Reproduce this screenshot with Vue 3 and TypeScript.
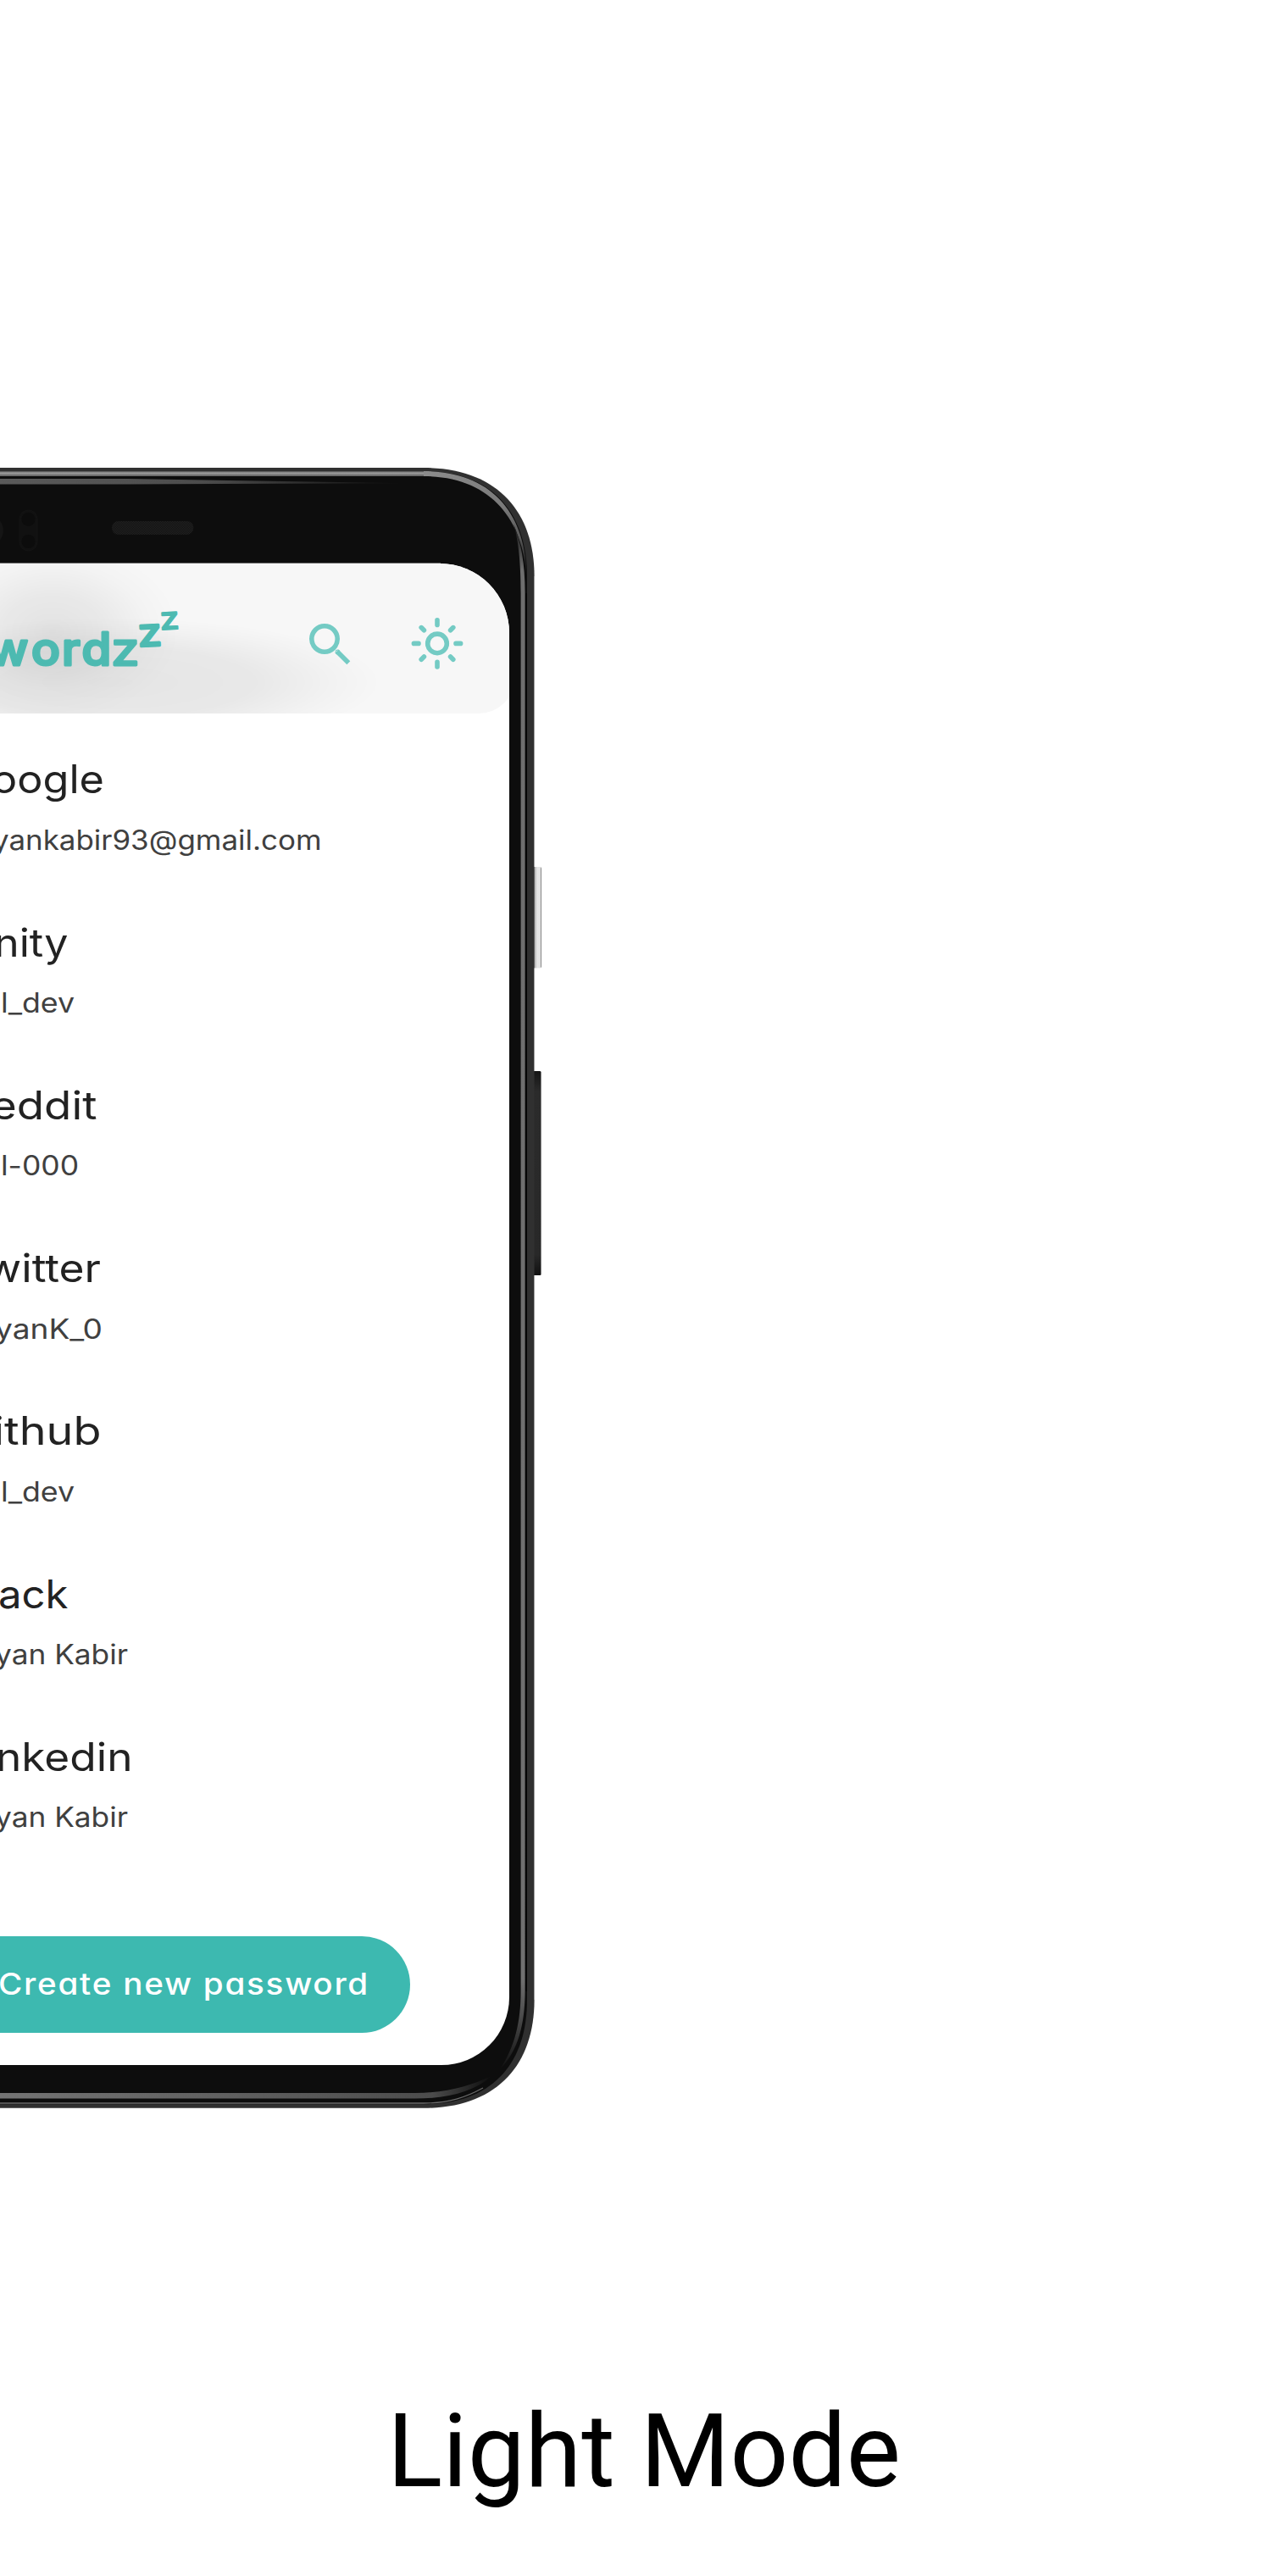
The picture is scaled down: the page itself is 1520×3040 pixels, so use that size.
<script setup lang="ts">
interface Line {
  text: string
  x: number
  end: number
}

interface Entry {
  site: Line
  user: Line
}

const line = (text: string, x: number, end: number): Line => ({ text, x, end })

// The left part of the phone lies outside the page, so each line starts at the page edge.
const entries: Entry[] = [
  { site: line('oogle', -10, 123), user: line('yankabir93@gmail.com', -9, 379.5) },
  { site: line('nity', -7, 80.5), user: line('l_dev', 1, 88) },
  { site: line('eddit', -11, 114.5), user: line('l-000', 1, 93) },
  { site: line('witter', -17, 119), user: line('yanK_0', -6, 121) },
  { site: line('ithub', -8, 119.5), user: line('l_dev', 1, 88) },
  { site: line('ack', -2, 80.5), user: line('yan Kabir', -6, 151) },
  { site: line('nkedin', -5, 156.5), user: line('yan Kabir', -6, 151) },
]

const rays = [0, 90, 180, 270]
</script>

<template>
  <main class="page">
    <section class="phone">
      <svg class="shell" width="640" height="1936" viewBox="0 552 640 1936">
        <defs>
          <linearGradient id="rim" x1="0" y1="556" x2="0" y2="562" gradientUnits="userSpaceOnUse">
            <stop offset="0" stop-color="#4a4a4a" />
            <stop offset="0.35" stop-color="#a0a0a0" />
            <stop offset="1" stop-color="#5c5c5c" />
          </linearGradient>
          <linearGradient id="rimSide" x1="500" y1="556" x2="622" y2="680" gradientUnits="userSpaceOnUse">
            <stop offset="0" stop-color="#8c8c8c" />
            <stop offset="0.55" stop-color="#7a7a7a" />
            <stop offset="0.8" stop-color="#555" />
            <stop offset="1" stop-color="#111" />
          </linearGradient>
          <linearGradient id="bandTop" x1="0" y1="0" x2="480" y2="0" gradientUnits="userSpaceOnUse">
            <stop offset="0" stop-color="#5a5a5a" />
            <stop offset="0.5" stop-color="#4c4c4c" />
            <stop offset="1" stop-color="#0d0d0d" />
          </linearGradient>
          <linearGradient id="bandSide" x1="0" y1="618" x2="0" y2="2445" gradientUnits="userSpaceOnUse">
            <stop offset="0" stop-color="#0d0d0d" />
            <stop offset="0.03" stop-color="#6e6e6e" />
            <stop offset="0.94" stop-color="#707070" />
            <stop offset="0.965" stop-color="#4a4a4a" />
            <stop offset="1" stop-color="#0d0d0d" />
          </linearGradient>
          <linearGradient id="bandBottom" x1="0" y1="0" x2="580" y2="0" gradientUnits="userSpaceOnUse">
            <stop offset="0" stop-color="#747474" />
            <stop offset="0.6" stop-color="#5a5a5a" />
            <stop offset="0.88" stop-color="#4c4c4c" />
            <stop offset="1" stop-color="#0d0d0d" />
          </linearGradient>
          <linearGradient id="power" x1="630" y1="0" x2="639" y2="0" gradientUnits="userSpaceOnUse">
            <stop offset="0" stop-color="#999" />
            <stop offset="0.3" stop-color="#d2d2d2" />
            <stop offset="0.45" stop-color="#e6e6e6" />
            <stop offset="0.85" stop-color="#e2e2e2" />
            <stop offset="0.92" stop-color="#888" />
          </linearGradient>
          <linearGradient id="volume" x1="0" y1="1264" x2="0" y2="1505" gradientUnits="userSpaceOnUse">
            <stop offset="0" stop-color="#141414" />
            <stop offset="0.1" stop-color="#2b2b2b" />
            <stop offset="0.9" stop-color="#282828" />
            <stop offset="1" stop-color="#101010" />
          </linearGradient>
          <pattern id="mesh" width="2" height="2" patternUnits="userSpaceOnUse">
            <rect width="2" height="2" fill="#111" />
            <rect width="1" height="1" fill="#222" />
            <rect x="1" y="1" width="1" height="1" fill="#222" />
          </pattern>
        </defs>

        <rect x="626" y="1023" width="13" height="119.5" rx="2" fill="url(#power)" />
        <rect x="626" y="1264" width="12.6" height="241" rx="1.5" fill="url(#volume)" />
        <path d="M638.5 1265V1504" stroke="#8a8a8a" stroke-width="0.8" />

        <path d="M-2 552H500C585 552 630.6 602 630.6 680V2360C630.6 2438 585 2487.8 500 2487.8H-2Z" fill="#303030" />
        <path d="M630.5 680V1023M630.5 1142.5V1264M630.5 1505V2360" stroke="#a8a8a8" stroke-width="0.8" />
        <path d="M-2 556H500C582 556 622 606 622 680V2360C622 2434 582 2483.2 500 2483.2H-2Z" fill="#0d0d0d" />
        <rect x="-2" y="556" width="504" height="6" fill="url(#rim)" />
        <path d="M500 556C582 556 621 608 621.5 680C617 612 578 562 500 562Z" fill="url(#rimSide)" />
        <path d="M-2 565H150L480 570.2L150 571.5H-2Z" fill="url(#bandTop)" />
        <path d="M606 618C612 640 614.6 662 614.6 700V2350C614.6 2385 608 2415 590 2442C612 2420 619.4 2388 619.6 2350V700C619.6 665 615 640 606 618Z" fill="url(#bandSide)" />
        <path d="M620.8 700V2350" stroke="#050505" stroke-width="1.5" />
        <path d="M-2 2470H490C525 2470 555 2462 580 2450C560 2468 530 2476.6 490 2476.6H-2Z" fill="url(#bandBottom)" />
        <path d="M-2 2482H500C530 2482 550 2475 570 2464" fill="none" stroke="#6a6a6a" stroke-width="1.3" />

        <circle cx="-14" cy="626" r="18" fill="#151515" />
        <rect x="23" y="602" width="21" height="48" rx="10.5" fill="#111" stroke="#141414" />
        <circle cx="33.5" cy="612.8" r="8" fill="#0c0c0c" />
        <circle cx="33.5" cy="639" r="8" fill="#0c0c0c" />
        <rect x="132" y="615" width="96.4" height="16" rx="8" fill="url(#mesh)" />
        <path d="M-2 664.5H520" stroke="#6a6a6a" />
      </svg>

      <div class="screen">
        <header class="bar">
          <svg width="601" height="177" viewBox="0 665 601 177">
            <g class="brand">
              <text y="784.8" x="-12.4 34.9 68.8 91" transform="scale(1.06 1)">word</text>
              <text transform="translate(131.4 784.8) scale(1.12 1)">z</text>
              <text class="z2" transform="translate(163.4 763) rotate(-3) scale(1.12 1)">z</text>
              <text class="z3" transform="translate(189.4 743) rotate(-3) scale(1.12 1)">z</text>
            </g>
            <g class="icon">
              <circle cx="383" cy="754" r="15.2" />
              <path d="M397.5 768.5L411.3 782.3" />
              <circle cx="398.4" cy="769.4" r="0.4" stroke-width="4.8" />
            </g>
            <g class="icon round" transform="translate(516 759.4)">
              <circle r="11.3" />
              <path v-for="a in rays" :key="a" :transform="`rotate(${a})`" d="M0-27.6V-22M15.6-15.6L18.8-18.8" />
            </g>
          </svg>
        </header>

        <ul class="list">
          <li v-for="(e, i) in entries" :key="i" class="entry">
            <svg class="site" width="601" height="60">
              <text :x="e.site.x" y="45" :textLength="e.site.end - e.site.x" lengthAdjust="spacingAndGlyphs">{{ e.site.text }}</text>
            </svg>
            <svg class="user" width="601" height="40">
              <text :x="e.user.x" y="30" :textLength="e.user.end - e.user.x" lengthAdjust="spacingAndGlyphs">{{ e.user.text }}</text>
            </svg>
          </li>
        </ul>

        <button class="create" type="button">
          <svg width="484" height="114">
            <text x="-2" y="69" textLength="438" lengthAdjust="spacingAndGlyphs">Create new password</text>
          </svg>
        </button>
      </div>
    </section>

    <h1 class="caption">Light Mode</h1>
  </main>
</template>

<style>
body {
  margin: 0;
  background: #fff;
}
</style>

<style scoped>
.page {
  display: flex;
  flex-direction: column;
  width: 1520px;
  height: 3040px;
  padding-top: 552px;
  box-sizing: border-box;
  overflow: hidden;
  background: #fff;
  font-family: Inter, "Liberation Sans", sans-serif;
}

svg {
  display: block;
}

.phone {
  display: grid;
  flex: none;
  width: 640px;
  height: 1936px;
}

.shell,
.screen {
  grid-area: 1 / 1;
}

.screen {
  display: flex;
  flex-direction: column;
  align-items: flex-start;
  width: 601px;
  height: 1771.7px;
  margin-top: 113px;
  overflow: hidden;
  border-radius: 0 82px 80px 0;
  background: #fff;
}

.bar {
  flex: none;
  width: 607px;
  height: 177.3px;
  border-radius: 0 0 42px 0;
  background:
    radial-gradient(ellipse 150px 105px at 62px 80px, rgba(0, 0, 0, 0.085), rgba(0, 0, 0, 0.062) 35%, rgba(0, 0, 0, 0.016) 75%, transparent),
    radial-gradient(ellipse 320px 76px at 130px 140px, rgba(0, 0, 0, 0.075), rgba(0, 0, 0, 0.062) 50%, rgba(0, 0, 0, 0.02) 82%, transparent),
    #f7f7f7;
}

.brand {
  fill: #4dbab1;
  stroke: #4dbab1;
  stroke-width: 3;
  stroke-linejoin: round;
  font-size: 53px;
  font-weight: 500;
}

.brand text + text {
  font-weight: 400;
}

.brand .z2 {
  font-size: 45px;
}

.brand .z3 {
  font-size: 36px;
  stroke-width: 2.2;
}

.icon {
  fill: none;
  stroke: #74cbc4;
  stroke-width: 5.6;
}

.round {
  stroke-linecap: round;
}

.list {
  flex: none;
  margin: 0;
  padding: 49.2px 0 0;
  list-style: none;
}

.entry {
  display: flex;
  flex-direction: column;
  gap: 21.5px;
  height: 192.25px;
}

.site {
  fill: #222;
  font-size: 46px;
}

.user {
  fill: #404040;
  font-size: 32px;
}

.create {
  flex: none;
  width: 484px;
  height: 114.2px;
  margin: 48px 0 0;
  padding: 0;
  border: 0;
  border-radius: 0 57px 57px 0;
  background: #3db9b0;
  fill: #fff;
  font-family: inherit;
  font-size: 35.5px;
  font-weight: 500;
  letter-spacing: 1.6px;
  font-feature-settings: "cv11";
}

.caption {
  margin: 334px 0 0;
  color: #000;
  font: 400 121px/142px Roboto, sans-serif;
  text-align: center;
}
</style>
